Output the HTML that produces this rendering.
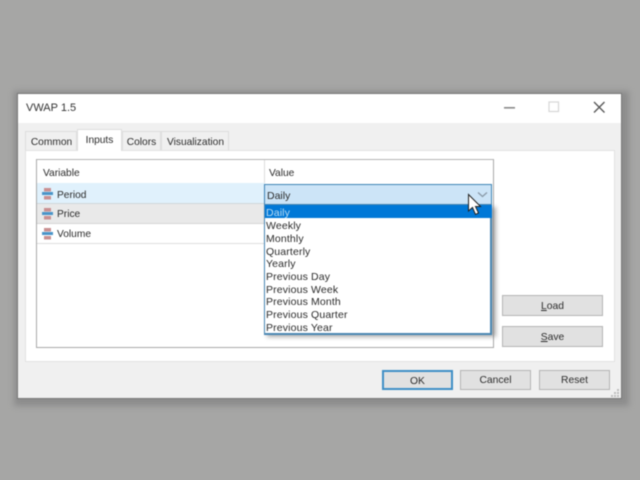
<!DOCTYPE html>
<html><head><meta charset="utf-8">
<style>
html,body{margin:0;padding:0;width:640px;height:480px;overflow:hidden;background:#a6a6a5}
#r{position:absolute;left:0;top:0;width:640px;height:480px;filter:blur(.5px);font:10.5px "Liberation Sans",sans-serif;color:#2b2b2b}
#r div,#r span{position:absolute;box-sizing:border-box;white-space:nowrap}
.t{line-height:13px}
.btn{background:#e1e1e1;border:1px solid #b4b4b4;text-align:center;line-height:21px;color:#2b2b2b;font-size:10.3px}
.tab{background:#f0f0f0;border:1px solid #dedede;border-bottom:0;text-align:center;line-height:21px;height:19px;font-size:10.200px}
.it{left:265px;line-height:13px;height:13px;color:#2b2b2b;padding-left:1px;letter-spacing:.14px}
</style></head>
<body><div id="r">
<div style="left:14px;top:91px;width:615px;height:315px;background:#8c8c8c;filter:blur(3px)"></div>
<div style="left:17px;top:93px;width:605px;height:306px;background:#f0f0f0;border:1px solid #787878"></div>
<div style="left:18px;top:94px;width:603px;height:29px;background:#fff"></div>
<div class="t" style="left:26px;top:102px;font-size:11px;color:#333">VWAP 1.5</div>
<svg style="position:absolute;left:500px;top:95px" width="120" height="26">
<rect x="4" y="12" width="11" height="1.600" fill="#8a8a8a"/>
<rect x="49" y="7" width="9.500" height="9.500" fill="none" stroke="#d6d6d6" stroke-width="1.200"/>
<path d="M94 7L104.500 17.500M104.500 7L94 17.500" stroke="#555" stroke-width="1.300" fill="none"/>
</svg>

<div style="left:25px;top:150px;width:590px;height:212px;background:#fff;border:1px solid #e2e2e2"></div>
<div class="tab" style="left:25px;top:131px;width:52px;padding-left:1px">Common</div>
<div class="tab" style="left:122px;top:131px;width:39px">Colors</div>
<div class="tab" style="left:161px;top:131px;width:68px;padding-left:1px">Visualization</div>
<div class="tab" style="left:77px;top:129px;width:45px;height:22px;background:#fff;line-height:21px;z-index:1">Inputs</div>

<div style="left:36px;top:159px;width:458px;height:189px;background:#fff;border:1px solid #a9a9a9;border-top-color:#b4b4b4"></div>
<div style="left:264px;top:160px;width:1px;height:24px;background:#dcdcdc"></div>
<div class="t" style="left:43px;top:167px;font-size:10.200px">Variable</div>
<div class="t" style="left:269px;top:167px;font-size:10.200px">Value</div>
<div style="left:37px;top:183px;width:228px;height:21px;background:#e0f1fc;border-bottom:1px solid #d0d6da"></div>
<div style="left:37px;top:204px;width:228px;height:20px;background:#e9e9e9;border-bottom:1px solid #d6d6d6"></div>
<div style="left:37px;top:224px;width:228px;height:20px;background:#fff;border-bottom:1px solid #dedede"></div>

<svg style="position:absolute;left:41px;top:188px" width="13" height="54">
<g><rect x="3" y="0" width="7" height="3.500" fill="#c99092"/><rect x="1" y="4" width="11" height="3" fill="#4a94c8"/><rect x="3" y="8" width="7" height="3.500" fill="#c99092"/></g>
<g transform="translate(0,20)"><rect x="3" y="0" width="7" height="3.500" fill="#c99092"/><rect x="1" y="4" width="11" height="3" fill="#4a94c8"/><rect x="3" y="8" width="7" height="3.500" fill="#c99092"/></g>
<g transform="translate(0,40)"><rect x="3" y="0" width="7" height="3.500" fill="#c99092"/><rect x="1" y="4" width="11" height="3" fill="#4a94c8"/><rect x="3" y="8" width="7" height="3.500" fill="#c99092"/></g>
</svg>
<div class="t" style="left:57px;top:189px;font-size:10.200px">Period</div>
<div class="t" style="left:57px;top:208px;font-size:10.200px">Price</div>
<div class="t" style="left:57px;top:228px;font-size:10.200px">Volume</div>

<div style="left:264px;top:184px;width:228px;height:21px;background:#cce4f7;border:1px solid #3f84b5"></div>
<div class="t" style="left:267px;top:190px">Daily</div>
<svg style="position:absolute;left:477px;top:191px" width="12" height="8"><path d="M1 1.500L5.500 5.500L10 1.500" fill="none" stroke="#8a9aa8" stroke-width="1.300"/></svg>

<div style="left:267px;top:207px;width:229px;height:130px;background:#8a8a8a;filter:blur(2px);opacity:.7"></div>
<div style="left:264px;top:205px;width:228px;height:130px;background:#fff;border:2px solid #4a87b3;border-top:0;border-left-width:1.500px"></div>
<div style="left:265px;top:205px;width:227px;height:13px;background:#0078d7"></div>
<div class="it" style="top:207px;color:#bcdcf2">Daily</div>
<div class="it" style="top:220px">Weekly</div>
<div class="it" style="top:233px">Monthly</div>
<div class="it" style="top:246px">Quarterly</div>
<div class="it" style="top:258px">Yearly</div>
<div class="it" style="top:271px">Previous Day</div>
<div class="it" style="top:284px">Previous Week</div>
<div class="it" style="top:296px">Previous Month</div>
<div class="it" style="top:309px">Previous Quarter</div>
<div class="it" style="top:322px">Previous Year</div>

<svg style="position:absolute;left:466px;top:193px" width="18" height="24"><path d="M2.500 1.500V18L6.500 14.500L9.500 21.500L12.500 20L9.500 13.500H14.500Z" fill="#fff" stroke="#222" stroke-width="1"/></svg>

<div class="btn" style="left:502px;top:295px;width:101px;height:21px"><u>L</u>oad</div>
<div class="btn" style="left:502px;top:326px;width:101px;height:21px"><u>S</u>ave</div>
<div class="btn" style="left:382px;top:370px;width:71px;height:20px;border:2px solid #3f8fc6;line-height:19px">OK</div>
<div class="btn" style="left:460px;top:370px;width:71px;height:20px;line-height:20px">Cancel</div>
<div class="btn" style="left:539px;top:370px;width:71px;height:20px;line-height:20px">Reset</div>
<svg style="position:absolute;left:611px;top:388px" width="10" height="10" fill="#bdbdbd"><rect x="6" y="1" width="2" height="2"/><rect x="3" y="4" width="2" height="2"/><rect x="6" y="4" width="2" height="2"/><rect x="0" y="7" width="2" height="2"/><rect x="3" y="7" width="2" height="2"/><rect x="6" y="7" width="2" height="2"/></svg>
</div></body></html>
